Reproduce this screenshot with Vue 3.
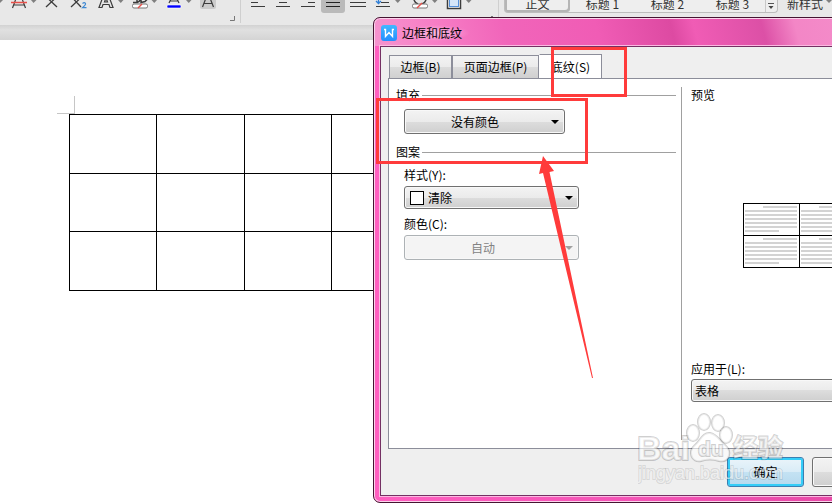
<script setup>
import { ref } from 'vue'

const tools = [
  { id: 'font-style', label: '字体', x: 0, w: 8 },
  { id: 'strike', label: '删除线', x: 8, w: 32 },
  { id: 'sup', label: '上标', x: 40, w: 24 },
  { id: 'sub', label: '下标', x: 64, w: 30 },
  { id: 'effect', label: '文字效果', x: 94, w: 34 },
  { id: 'highlight', label: '突出显示', x: 128, w: 34 },
  { id: 'color', label: '字体颜色', x: 162, w: 34 },
  { id: 'charshade', label: '字符底纹', x: 196, w: 26 },
  { id: 'font-more', label: '字体设置', x: 222, w: 24 },
  { id: 'left', label: '左对齐', x: 246, w: 25 },
  { id: 'center', label: '居中', x: 271, w: 25 },
  { id: 'right', label: '右对齐', x: 296, w: 25 },
  { id: 'justify', label: '两端对齐', x: 321, w: 25 },
  { id: 'distribute', label: '分散对齐', x: 346, w: 25 },
  { id: 'spacing', label: '行距', x: 371, w: 34 },
  { id: 'fill', label: '底纹颜色', x: 405, w: 36 },
  { id: 'border', label: '边框', x: 441, w: 34 },
  { id: 'para-more', label: '段落设置', x: 475, w: 29 },
]
const presets = ['正文', '标题 1', '标题 2', '标题 3']
const tabs = ['边框(B)', '页面边框(P)', '底纹(S)']
const preset = ref(0)
const activeTab = ref(2)
</script>

<template>
  <div class="app">
    <header class="ribbon">
      <div class="tools">
        <button v-for="t in tools" :key="t.id" class="tool" type="button" :aria-label="t.label" :style="{ width: t.w + 'px' }">
          <svg class="glyph" :viewBox="`${t.x} 0 ${t.w} 25`" fill="none" stroke="#3c3c3c" stroke-width="1.5">
            <path v-if="t.id === 'font-style'" class="caret" d="M-4 0H3L0 3z" />
            <g v-else-if="t.id === 'strike'">
              <path d="M15.500 0l-3 8M22.500 0l3 8M14 5h10" stroke-width="1.200" />
              <path d="M11 2.500h16" stroke="#e8504a" />
              <path class="caret" d="M31 0h5.500L33.500 3z" />
            </g>
            <path v-else-if="t.id === 'sup'" d="M48.500 -1L57 7M54.500 -1L46 7" stroke-width="1.300" />
            <g v-else-if="t.id === 'sub'">
              <path d="M73.500 -1L81 7M79.500 -1L71 7" stroke-width="1.300" />
              <path d="M82.500 3.500q2-1.600 3 0q.5 1.200-3 4.200h4" stroke="#3e88d2" stroke-width="1.200" />
            </g>
            <g v-else-if="t.id === 'effect'">
              <path d="M102.500 -2l-3.500 9.500h3l1-3h6l1 3h3L109.500 -2M104.500 2h3L106 -2z" stroke-width="1.200" />
              <path class="caret" d="M118 0h5.500l-2.750 3z" />
            </g>
            <g v-else-if="t.id === 'highlight'">
              <path d="M133 2.500h4V0M137 2.500c3-1 3-2 3-3M141 0v2.500l4-1 3-3" />
              <rect x="132.500" y="4" width="15" height="4" rx="1.500" fill="#fff" stroke="#777" stroke-width="1" />
              <path d="M138 8l4-4" stroke="#e8504a" />
              <path class="caret" d="M151.500 0h5.500l-2.750 3z" />
            </g>
            <g v-else-if="t.id === 'color'">
              <path d="M171 -1l-2 4M177 -1l2 4M170 1h8" stroke-width="1.200" />
              <rect x="167" y="5" width="14" height="3" rx="1" fill="#00f" stroke="#fff" stroke-width=".6" />
              <path class="caret" d="M186 0h5.500l-2.750 3z" />
            </g>
            <g v-else-if="t.id === 'charshade'">
              <rect x="200" y="-4" width="16" height="13" rx="2" fill="#cbcbcb" stroke="none" />
              <path d="M206 -2l-3.500 9M210 -2l3.500 9M204 3.500h8" stroke-width="1.200" />
            </g>
            <g v-else-if="t.id === 'font-more'">
              <path d="M230 20.500h4.500V16" stroke="#777" stroke-width="1" />
              <path d="M240.500 0v23" stroke="#cfcfcf" stroke-width="1" />
            </g>
            <path v-else-if="t.id === 'left'" d="M251 2.500h7M251 6.500h14" stroke-width="1" />
            <path v-else-if="t.id === 'center'" d="M279 2.500h8M276 6.500h14" stroke-width="1" />
            <path v-else-if="t.id === 'right'" d="M308 2.500h7M301 6.500h14" stroke-width="1" />
            <g v-else-if="t.id === 'justify'">
              <rect x="321" y="-4" width="24" height="17" rx="3" fill="#bababa" stroke="none" />
              <path d="M326 2.500h14M326 6.500h14" stroke="#222" stroke-width="1" />
            </g>
            <path v-else-if="t.id === 'distribute'" d="M350 2.500h16M350 6.500h16" stroke-width="1" />
            <g v-else-if="t.id === 'spacing'">
              <path d="M381 2.500h8M376 6.500h14" stroke-width="1" />
              <path d="M378.500 0v3M376 1l2.500 2.500L381 1" stroke="#2f7fd6" stroke-width="1.300" />
              <path class="caret" d="M395 0h5.500l-2.750 3z" />
            </g>
            <g v-else-if="t.id === 'fill'">
              <path d="M414 0q1 3 4 4M426 0q-1 3-4 4" />
              <rect x="412.500" y="4" width="15" height="4" rx="1.500" fill="#fff" stroke="#777" stroke-width="1" />
              <path d="M417 8l5-5" stroke="#e8504a" />
              <path class="caret" d="M432 0h5.500l-2.750 3z" />
            </g>
            <g v-else-if="t.id === 'border'">
              <rect x="447.500" y="-5" width="13" height="13.500" fill="#fff" />
              <rect x="449.500" y="-5" width="9" height="11.500" fill="#d5e5f8" stroke="#5590da" stroke-width="1" />
              <path class="caret" d="M466 0h5.500l-2.750 3z" />
            </g>
            <g v-else>
              <path d="M491 16.500h2" stroke="#777" stroke-width="1" />
              <path d="M498.500 0v17" stroke="#cfcfcf" stroke-width="1" />
            </g>
          </svg>
        </button>
      </div>
      <div class="gallery">
        <button v-for="(p, i) in presets" :key="p" class="preset" :class="{ chosen: preset === i }" type="button" @click="preset = i">{{ p }}</button>
        <button class="more" type="button" aria-label="更多样式">
          <svg width="8" height="12" viewBox="0 0 8 12"><path d="M1 3.500h6" stroke="#555" /><path d="M1.500 6h5L4 9z" fill="#444" /></svg>
        </button>
      </div>
      <button class="new-style" type="button">新样式
        <svg width="6" height="3" viewBox="0 0 6 3"><path class="caret" d="M0 0h6L3 3z" /></svg>
      </button>
    </header>

    <main class="document">
      <div class="corner"></div>
      <table class="sheet" aria-label="文档表格">
        <tbody><tr v-for="r in 3" :key="r"><td v-for="c in 4" :key="c"></td></tr></tbody>
      </table>
    </main>

    <section class="dialog" role="dialog" aria-labelledby="dialog-title">
      <div class="titlebar">
        <svg class="logo" width="16" height="16" viewBox="0 0 16 16">
          <defs><linearGradient id="logo-blue" x2="0" y2="1"><stop stop-color="#42b8ff" /><stop offset="1" stop-color="#248eff" /></linearGradient></defs>
          <rect width="16" height="16" rx="3" fill="url(#logo-blue)" />
          <path d="M3 4.500h1.500V11.500L8 7.500l3.500 4V4.500H13" fill="none" stroke="#fff" stroke-width="1.400" />
        </svg>
        <h1 id="dialog-title">边框和底纹</h1>
      </div>
      <div class="client">
        <div class="tabs" role="tablist">
          <button v-for="(t, i) in tabs" :key="t" class="tab" :class="{ active: activeTab === i }" role="tab" type="button" :aria-selected="activeTab === i" @click="activeTab = i">{{ t }}</button>
        </div>
        <div class="panel">
          <div class="settings">
            <h2 class="group">填充</h2>
            <button class="field fill-button" type="button">
              <span>没有颜色</span>
              <svg width="8" height="4" viewBox="0 0 8 4"><path d="M0 0h8L4 4z" /></svg>
            </button>
            <h2 class="group">图案</h2>
            <label class="caption" for="pattern">样式(Y):</label>
            <div class="combo">
              <select id="pattern" class="field with-swatch"><option>清除</option></select>
              <span class="swatch"></span>
              <svg class="arrow" width="8" height="4" viewBox="0 0 8 4"><path d="M0 0h8L4 4z" /></svg>
            </div>
            <label class="caption" for="pattern-color">颜色(C):</label>
            <div class="combo">
              <select id="pattern-color" class="field tall" disabled><option>自动</option></select>
              <svg class="arrow faded" width="8" height="4" viewBox="0 0 8 4"><path d="M0 0h8L4 4z" /></svg>
            </div>
          </div>
          <div class="divider"></div>
          <div class="preview">
            <h2>预览</h2>
            <div class="preview-area">
              <div class="mini">
                <div v-for="n in 4" :key="n" class="mini-cell"><i v-for="k in 7" :key="k"></i></div>
              </div>
            </div>
            <label class="caption" for="scope">应用于(L):</label>
            <select id="scope" class="field"><option>表格</option></select>
          </div>
        </div>
        <footer class="actions">
          <button class="action primary" type="button">确定</button>
          <button class="action" type="button">取消</button>
        </footer>
      </div>
    </section>

    <svg class="marks" width="832" height="503" viewBox="0 0 832 503" aria-hidden="true">
      <g fill="none" stroke="#ff3b3b" stroke-width="3">
        <rect x="552.500" y="48.500" width="73" height="47" />
        <rect x="377.500" y="99.500" width="209" height="63" />
      </g>
      <path d="M543 156L554 171L549.500 172L593 378H592L543 173L539 174z" fill="#ff3b3b" />
    </svg>

    <div class="watermark" aria-hidden="true">
      <svg width="150" height="74" viewBox="0 0 150 74">
        <g class="stamp">
          <text x="-1" y="47" font-size="34" font-weight="700">Bai</text>
          <ellipse cx="66" cy="9" rx="6" ry="8" />
          <ellipse cx="80" cy="10" rx="6" ry="8" />
          <ellipse cx="55" cy="20" rx="6" ry="8" />
          <ellipse cx="88" cy="22" rx="6" ry="8" />
          <path d="M72 20C65 19 62 28 57 32C49 39 54 50 63 48Q72 45 81 48C91 50 95 39 87 32C81 27 79 21 72 20z" />
          <text x="60" y="43" font-size="21" font-weight="700">du</text>
          <text class="cjk" x="95" y="44" font-size="25" font-weight="700">经验</text>
          <text class="url" x="0" y="66" font-size="18">jingyan.baidu.com</text>
        </g>
      </svg>
    </div>
  </div>
</template>

<style>
body { margin: 0; overflow: hidden; }
</style>

<style scoped>
* { box-sizing: border-box; }
.app {
  position: relative;
  display: flex;
  flex-direction: column;
  height: 100vh;
  overflow: hidden;
  background: #fff;
  color: #000;
  font: 12px/16px "Noto Sans CJK SC", sans-serif;
}
button, select { font: inherit; color: inherit; margin: 0; }
h1, h2 { margin: 0; font-size: 12px; font-weight: 400; }

.ribbon {
  display: flex;
  align-items: flex-start;
  flex: none;
  height: 40px;
  background: linear-gradient(#e8e8e8 0 25px, #d2d2d2 25px, #e0e0e0 30px, #d4d4d4 40px);
  overflow: hidden;
}
.tools { display: flex; flex: none; }
.tool { flex: none; height: 25px; padding: 0; border: 0; background: none; }
.glyph { display: block; width: 100%; height: 25px; }
.caret { fill: #808080; stroke: none; }
.gallery {
  display: flex;
  flex: none;
  height: 13px;
  border: 1px solid #bdbdbd;
  border-top: 0;
  border-radius: 0 0 4px 4px;
  background: #eee;
  color: #333;
}
.preset {
  width: 65px;
  height: 12px;
  padding: 0 0 4px;
  border: 0;
  background: none;
  line-height: 8px;
}
.preset.chosen { border-radius: 0 0 3px 3px; box-shadow: inset 2px 0 #b5b5b5, inset -2px -2px #b5b5b5; }
.more { width: 12px; height: 12px; padding: 0 1px; border: 0; border-left: 1px solid #c8c8c8; background: none; }
.more svg { display: block; }
.new-style {
  display: flex;
  align-items: center;
  flex: none;
  gap: 3px;
  height: 8px;
  margin-left: 9px;
  padding: 0;
  border: 0;
  background: none;
  color: #333;
  line-height: 8px;
  white-space: nowrap;
}
.new-style svg { flex: none; align-self: flex-start; }

.document { flex: 1; padding: 56px 0 0 57px; }
.corner { width: 18px; height: 18px; border: solid #c6c6c6; border-width: 0 1px 1px 0; }
.sheet { width: 350px; height: 177px; margin-left: 12px; border-collapse: collapse; table-layout: fixed; }
.sheet td { padding: 0; border: 1px solid #000; }

.dialog {
  position: absolute;
  top: 17px;
  right: -81px;
  bottom: 0;
  left: 373px;
  display: flex;
  flex-direction: column;
  padding: 1px 6px 6px;
  border: 1px solid #451431;
  border-radius: 7px;
  box-shadow: inset 0 0 0 1px #fbd3eb;
  background:
    linear-gradient(75deg, #f594ce 0, #f77fc6 60px, #f165ba 130px, #f05cb5 220px, #dd4aa2 292px, #f05cb5 314px, #dc50a6 380px, #f386c6 412px, #f594ce 100%) top / 100% 28px no-repeat,
    linear-gradient(90deg, #ff5fc0, #f453b6 50%, #e446a2);
}
.titlebar { display: flex; align-items: center; gap: 5px; height: 27px; padding-left: 1px; }
.titlebar h1 { padding-right: 8px; background: radial-gradient(closest-side, #ffffff77, #ffffff00); }
.client {
  display: flex;
  flex: 1;
  flex-direction: column;
  min-height: 0;
  border: 1px solid #743063;
  box-shadow: 0 0 0 1px #fbb9e1;
  background: #efefef;
}
.tabs { display: flex; align-items: flex-end; height: 31px; padding-left: 8px; }
.tab {
  width: 63px;
  height: 23px;
  padding: 0;
  border: 1px solid #8c8e9a;
  border-bottom: 0;
  background: linear-gradient(#f3f3f3, #ebebeb 50%, #dcdcdc 50%, #d0d0d0);
  white-space: nowrap;
}
.tab:nth-child(2) { width: 87px; }
.tab.active { height: 25px; margin-bottom: -1px; border-left-color: #fff; background: #fff; }
.panel {
  display: flex;
  flex: 1;
  min-height: 0;
  margin-left: 7px;
  padding: 8px 0;
  border: solid #8c8e9a;
  border-width: 1px 0 1px 1px;
  background: #fff;
}
.settings { display: flex; flex-direction: column; width: 287px; padding-left: 7px; }
.group { display: flex; align-items: center; gap: 2px; height: 16px; }
.group::after { content: ""; flex: 1; height: 1px; background: #a0a0a0; }
.field {
  height: 23px;
  padding: 0 3px;
  border: 1px solid #707070;
  border-radius: 3px;
  appearance: none;
  background: linear-gradient(#f3f3f3, #ebebeb 50%, #dddddd 50%, #cfcfcf);
  box-shadow: inset 0 0 0 1px #f8f8f8;
}
.fill-button { display: flex; align-items: center; width: 161px; height: 25px; margin: 6px 0 10px 8px; padding: 0 5px 0 0; }
.fill-button span { flex: 1; padding-right: 6px; text-align: center; }
.caption { height: 16px; }
.settings .caption { margin: 7px 0 3px 8px; }
.combo { display: grid; width: 175px; margin-left: 8px; align-items: center; }
.combo > * { grid-area: 1 / 1; }
.with-swatch { padding-left: 23px; }
.swatch { width: 14px; height: 14px; margin-left: 6px; border: 1px solid #000; background: #fff; pointer-events: none; }
.arrow { justify-self: end; margin-right: 6px; pointer-events: none; }
.faded { fill: #a0a0a0; }
.tall { height: 25px; padding-right: 20px; text-align: center; text-align-last: center; }
.field:disabled { border-color: #adb2b5; background: #f4f4f4; color: #838383; opacity: 1; }
.divider { width: 1px; margin-left: 5px; background: #a0a0a0; }
.preview { display: flex; flex: 1; flex-direction: column; padding: 0 16px 38px 9px; }
.preview h2 { height: 16px; }
.preview-area { display: flex; flex: 1; align-items: center; padding: 6px 0 0 52px; }
.mini { display: grid; grid-template-columns: 56px 56px; border: solid #000; border-width: 1px 0 0 1px; }
.mini-cell { display: flex; flex-direction: column; gap: 2px; height: 32px; padding: 2px 2px 0 1px; border: solid #000; border-width: 0 1px 1px 0; }
.mini-cell i { height: 2px; background: #d3d3d3; }
.mini-cell i:first-child { margin-left: 18px; }
.mini-cell i:last-child { margin-right: 18px; }
.preview .caption { margin-bottom: 2px; }
.actions { display: flex; flex: none; justify-content: flex-end; gap: 8px; height: 46px; padding: 8px 16px 8px 0; }
.action {
  width: 77px;
  height: 30px;
  padding: 0;
  border: 1px solid #707070;
  border-radius: 3px;
  background: linear-gradient(#f3f3f3, #ebebeb 50%, #dddddd 50%, #cfcfcf);
  box-shadow: inset 0 0 0 1px #fafafa;
}
.primary {
  border-color: #3c7fb1;
  background: linear-gradient(#eaf4fa, #d9ecf7 50%, #c4e2f3 50%, #b6d9ee);
  box-shadow: inset 0 0 0 2px #35cdf8;
}
.marks { position: absolute; top: 0; left: 0; pointer-events: none; }
.watermark { position: absolute; top: 413px; left: 638px; pointer-events: none; }
.watermark svg { display: block; }
.stamp { fill: #ffffff99; stroke: #00000030; stroke-width: 2; paint-order: stroke; font-family: "Liberation Sans", sans-serif; }
.url { stroke: #0000001c; }
.cjk { font-family: "Noto Sans CJK SC", sans-serif; }
</style>
